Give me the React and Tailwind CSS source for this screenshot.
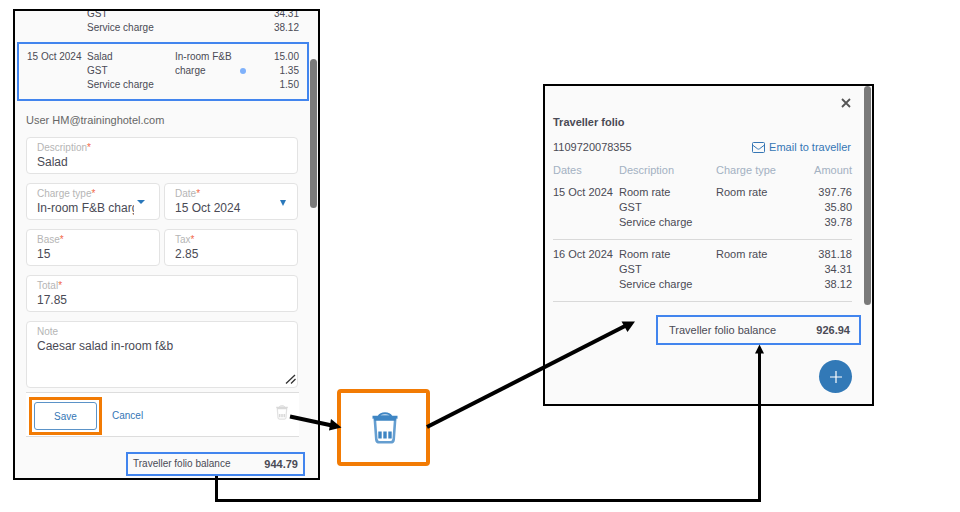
import React from 'react';

const folioRows = [
  { date: '15 Oct 2024', type: 'Room rate', lines: [['Room rate', '397.76'], ['GST', '35.80'], ['Service charge', '39.78']] },
  { date: '16 Oct 2024', type: 'Room rate', lines: [['Room rate', '381.18'], ['GST', '34.31'], ['Service charge', '38.12']] },
];

const TrashIcon = ({ className }) => (
  <svg viewBox="0 0 26 32" fill="none" stroke="currentColor" className={className} aria-hidden="true">
    <path d="M6.500 4.500C8 1.800 10 1.200 13 1.200s5 .6 6.500 3.300z" fill="currentColor" fillOpacity="0.350" strokeWidth="1.800" />
    <path d="M0.500 3.800h25v3h-1.500l-.5 2h-21l-.5-2h-1.500z" fill="currentColor" stroke="none" />
    <path d="M2.800 7l1.500 20.500c.2 1.800 1.400 2.800 3.200 2.800h11c1.800 0 3-1 3.200-2.800l1.500-20.500" strokeWidth="2.600" strokeOpacity="0.800" />
    <path d="M8 19.500v7M13 19.500v7M18 19.500v7" strokeWidth="3.400" />
  </svg>
);

const Caret = ({ className }) => (
  <svg viewBox="0 0 8 4" preserveAspectRatio="none" className={className} aria-hidden="true">
    <path d="M0 0h8L4 4z" fill="#2a78bb" />
  </svg>
);

const Field = ({ id, label, required = true, children }) => (
  <div className="min-w-0 rounded border border-[#e3e3e3] bg-white pt-1 pb-[3px] pl-2.5">
    <label htmlFor={id} className="block text-[10px] leading-3 text-[#b5b5b5]">
      {label}
      {required && <span className="text-[#f2694b]">*</span>}
    </label>
    {children}
  </div>
);

const inputClass = 'block h-4 w-full min-w-0 bg-transparent text-xs leading-4 text-[#4a4a55] outline-none';

const ChargePanel = () => (
  <section className="relative overflow-hidden border-2 border-black bg-[#fafafa] pb-0.5">
    <table className="-mt-1 mr-[9px] ml-0.5 w-[calc(100%-11px)] table-fixed border-collapse text-[10px] leading-[14px] text-[#4a4a55]">
      <colgroup>
        <col className="w-[70px]" />
        <col className="w-[88px]" />
        <col className="w-[72px]" />
        <col />
      </colgroup>
      <tbody>
        <tr className="align-top">
          <td />
          <td className="pb-[7px]">GST<br />Service charge</td>
          <td />
          <td className="pr-2.5 text-right">34.31<br />38.12</td>
        </tr>
        <tr className="align-top outline-2 -outline-offset-2 outline-[#4285ee]">
          <td className="pt-2 pl-2.5 whitespace-nowrap">15 Oct 2024</td>
          <td className="pt-2 pb-[9px]">Salad<br />GST<br />Service charge</td>
          <td className="pt-2">
            <div className="flex justify-between pr-px">
              <span className="whitespace-nowrap">In-room F&amp;B<br />charge</span>
              <span className="mb-1 size-1.5 shrink-0 self-end rounded-full bg-[#7fb1fb]" />
            </div>
          </td>
          <td className="pt-2 pr-2.5 text-right">15.00<br />1.35<br />1.50</td>
        </tr>
      </tbody>
    </table>

    <div className="pr-5 pl-[11px]">
      <p className="mt-[11px] text-[11px] leading-4 text-[#666]">User HM@traininghotel.com</p>

      <form className="mt-[9px]" onSubmit={(e) => e.preventDefault()}>
        <div className="grid gap-[9px]">
          <Field id="description" label="Description">
            <input id="description" className={inputClass} defaultValue="Salad" />
          </Field>
          <div className="grid grid-cols-2 gap-1">
            <Field id="type" label="Charge type">
              <div className="flex gap-[3px] pr-3.5">
                <select id="type" className={`${inputClass} flex-1 appearance-none`}>
                  <option>In-room F&amp;B charge</option>
                </select>
                <Caret className="h-1 w-2 shrink-0" />
              </div>
            </Field>
            <Field id="date" label="Date">
              <div className="flex pr-[11px]">
                <input id="date" className={`${inputClass} flex-1`} defaultValue="15 Oct 2024" />
                <Caret className="h-1.5 w-1.5 shrink-0" />
              </div>
            </Field>
          </div>
          <div className="grid grid-cols-2 gap-1">
            <Field id="base" label="Base">
              <input id="base" className={inputClass} defaultValue="15" />
            </Field>
            <Field id="tax" label="Tax">
              <input id="tax" className={inputClass} defaultValue="2.85" />
            </Field>
          </div>
          <Field id="total" label="Total">
            <input id="total" className={inputClass} defaultValue="17.85" />
          </Field>
          <Field id="note" label="Note" required={false}>
            <div className="flex items-end">
              <textarea
                id="note"
                className="block h-[46px] w-full flex-1 resize-none bg-transparent text-xs leading-4 text-[#4a4a55] outline-none"
                defaultValue="Caesar salad in-room f&b"
              />
              <svg viewBox="0 0 12 10" className="h-2.5 w-3 shrink-0" aria-hidden="true">
                <path d="M1 9.500L10 1M6 9.500l4.500-4.500" stroke="#333" strokeWidth="1.300" />
              </svg>
            </div>
          </Field>
        </div>

        <div className="mt-1 -mr-px flex items-start border-y border-[#ddd] bg-white pt-1 pb-px pl-[3px]">
          <div className="w-[73px] border-[3px] border-[#f27b04] p-0.5">
            <button type="submit" className="block h-7 w-full rounded-[3px] border border-[#5b93c8] text-[10px] font-medium text-[#3576b5]">
              Save
            </button>
          </div>
          <button type="button" className="mt-3 ml-2.5 text-[10px] leading-[14px] text-[#3576b5]">Cancel</button>
          <button type="button" aria-label="Delete charge" className="mt-2 mr-[11px] ml-auto text-[#d9d9d9]">
            <TrashIcon className="h-[15px] w-3" />
          </button>
        </div>
      </form>
    </div>

    <div className="mt-[15px] mr-[13px] ml-auto flex h-6 w-[179px] items-center justify-between border-2 border-[#4285ee] px-[5px] text-[#4a4a55]">
      <span className="text-[10px] leading-[14px]">Traveller folio balance</span>
      <strong className="text-[11px] leading-[14px]">944.79</strong>
    </div>

    <div className="absolute top-12 right-px h-[149px] w-[7px] rounded-full bg-[#7a7a7a]" />
  </section>
);

const FolioPanel = () => (
  <section className="relative mt-[75px] border-2 border-black bg-[#fafafa] pr-5 pb-[11px] pl-2 text-[11px] leading-[15px] text-[#4a4a55]">
    <button type="button" aria-label="Close" className="mt-3 ml-auto block text-[#555]">
      <svg viewBox="0 0 10 10" className="mr-px size-2.5" aria-hidden="true">
        <path d="M1 1l8 8M9 1L1 9" stroke="currentColor" strokeWidth="1.800" />
      </svg>
    </button>
    <h2 className="mt-[7px] font-bold">Traveller folio</h2>
    <div className="mt-2.5 flex items-center justify-between pr-px">
      <span>1109720078355</span>
      <a href="#email" className="flex items-center gap-1 text-[#3576b5]">
        <svg viewBox="0 0 13 11" fill="none" stroke="currentColor" className="h-[11px] w-[13px]" aria-hidden="true">
          <rect x="0.500" y="0.500" width="12" height="10" rx="1" />
          <path d="M0.500 3l5 3.800q1 .7 2 0l5-3.800" />
        </svg>
        Email to traveller
      </a>
    </div>

    <table className="mt-2 w-full table-fixed border-collapse">
      <colgroup>
        <col className="w-[66px]" />
        <col className="w-[97px]" />
        <col className="w-[72px]" />
        <col />
      </colgroup>
      <thead>
        <tr className="text-left text-[#a3b1c2]">
          <th className="font-normal">Dates</th>
          <th className="font-normal">Description</th>
          <th className="font-normal">Charge type</th>
          <th className="text-right font-normal">Amount</th>
        </tr>
      </thead>
      <tbody>
        {folioRows.map((row) => (
          <tr key={row.date} className="border-b border-[#d9d9d9] align-top">
            <td className="pt-[7px] whitespace-nowrap">{row.date}</td>
            <td className="pt-[7px] pb-[9px]">
              {row.lines.map(([name]) => <div key={name}>{name}</div>)}
            </td>
            <td className="pt-[7px]">{row.type}</td>
            <td className="pt-[7px] text-right">
              {row.lines.map(([name, amount]) => <div key={name}>{amount}</div>)}
            </td>
          </tr>
        ))}
      </tbody>
    </table>

    <div className="mt-[13px] -mr-[9px] ml-auto flex h-[30px] w-[205px] items-center justify-between border-2 border-[#4285ee] px-[9px] pl-[11px]">
      <span>Traveller folio balance</span>
      <strong>926.94</strong>
    </div>
    <button type="button" aria-label="Add charge" className="mt-[15px] ml-auto flex size-[33px] items-center justify-center rounded-full bg-[#3279b7] text-white">
      <svg viewBox="0 0 12 12" className="size-3" aria-hidden="true">
        <path d="M6 0v12M0 6h12" stroke="currentColor" strokeWidth="1.200" />
      </svg>
    </button>

    <div className="absolute top-0 right-px h-[219px] w-[7px] rounded-full bg-[#7a7a7a]" />
  </section>
);

const Arrows = () => (
  <svg viewBox="0 0 960 512" preserveAspectRatio="none" className="pointer-events-none absolute inset-0 h-full w-full" aria-hidden="true">
    <g fill="none" stroke="#000">
      <path d="M290 416.500L332 425.500" strokeWidth="4" />
      <path d="M427 427L626 325.500" strokeWidth="4" />
      <path d="M216.500 476v24.500h543V352" strokeWidth="3" />
    </g>
    <path d="M341.500 427.500L331 419l-2 11.500z" />
    <path d="M635 321.500h-13.500l6 10.500z" />
    <path d="M759.500 344.500l-4.500 9h9z" />
  </svg>
);

export default function App() {
  return (
    <main
      className="relative grid grid-cols-[307fr_17fr_93fr_113fr_331fr] items-start bg-white pt-[9px] pr-[86px] pb-8 pl-[13px]"
      style={{ fontFamily: '"Liberation Sans", Arial, sans-serif' }}
    >
      <ChargePanel />
      <div className="col-start-3 mt-[380px] flex h-[77px] items-center justify-center rounded-sm border-4 border-[#f27b04] bg-white pl-0.5 text-[#3f86c4]">
        <TrashIcon className="h-8 w-[26px]" />
      </div>
      <div className="col-start-5">
        <FolioPanel />
      </div>
      <Arrows />
    </main>
  );
}
